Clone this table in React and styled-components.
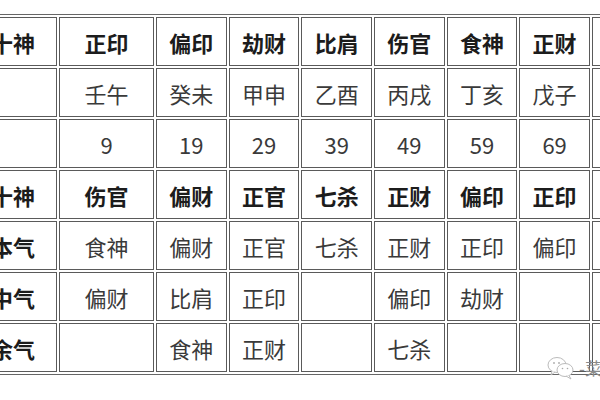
import styled, { createGlobalStyle } from "styled-components";

const GlobalStyle = createGlobalStyle`
  html, body {
    margin: 0;
    padding: 0;
    background: #fff;
  }
  body {
    font-family: "Noto Sans CJK SC", "Noto Sans", sans-serif;
  }
`;

// last column is cut off by the right edge, only its border shows
const rows = [
  { head: true, cells: ["十神", "正印", "偏印", "劫财", "比肩", "伤官", "食神", "正财", ""] },
  { cells: ["", "壬午", "癸未", "甲申", "乙酉", "丙戌", "丁亥", "戊子", ""] },
  { cells: ["", "9", "19", "29", "39", "49", "59", "69", ""] },
  { head: true, cells: ["十神", "伤官", "偏财", "正官", "七杀", "正财", "偏印", "正印", ""] },
  { cells: ["本气", "食神", "偏财", "正官", "七杀", "正财", "正印", "偏印", ""] },
  { cells: ["中气", "偏财", "比肩", "正印", "", "偏印", "劫财", "", ""] },
  { cells: ["余气", "", "食神", "正财", "", "七杀", "", "", ""] },
];

const Page = styled.div`
  position: relative;
  width: 600px;
  height: 400px;
  overflow: hidden;
`;

const Table = styled.div`
  display: grid;
  grid-template-columns: 88px 95px repeat(7, 70.67px);
  grid-auto-rows: 49px;
  gap: 2px;
  padding: 2px;
  margin: 14px 0 0 -34px;
  width: max-content;
  border: 1px solid #666;
`;

const Cell = styled.div`
  box-sizing: border-box;
  border: 1px solid #5a5a5a;
  display: flex;
  align-items: center;
  justify-content: center;
  font-size: 22px;
  line-height: 1;
  padding-top: 1px;
  white-space: nowrap;
  font-weight: ${({ $bold }) => ($bold ? 700 : 400)};
  color: ${({ $bold }) => ($bold ? "#1c1c1c" : "#3a3a3a")};
`;

const Watermark = styled.div`
  position: absolute;
  left: 546px;
  top: 355px;
  display: flex;
  align-items: center;
  gap: 3px;
  color: #8a8a8a;
  font-size: 17px;
  white-space: nowrap;
`;

const WeChatMark = () => (
  <svg width="30" height="24" viewBox="0 0 30 24">
    <ellipse cx="11" cy="9" rx="9" ry="7.5" fill="#fff" stroke="#bbb" strokeWidth="1" />
    <path d="M6 15 L5 19 L9 16" fill="#fff" stroke="#bbb" strokeWidth="1" />
    <ellipse cx="19" cy="14" rx="8" ry="6.5" fill="#fff" stroke="#bbb" strokeWidth="1" />
    <path d="M23 19.5 L25 23 L20 20" fill="#fff" stroke="#bbb" strokeWidth="1" />
    <circle cx="8" cy="7" r="0.9" fill="#aaa" />
    <circle cx="13" cy="7" r="0.9" fill="#aaa" />
    <circle cx="16.5" cy="12.5" r="0.8" fill="#aaa" />
    <circle cx="21.5" cy="12.5" r="0.8" fill="#aaa" />
  </svg>
);

export default function App() {
  return (
    <>
      <GlobalStyle />
      <Page>
        <Table>
          {rows.map((row, r) =>
            row.cells.map((text, c) => (
              <Cell key={`${r}-${c}`} $bold={row.head || c === 0}>
                {text}
              </Cell>
            ))
          )}
        </Table>
        <Watermark>
          <WeChatMark />
          <span>-菜</span>
        </Watermark>
      </Page>
    </>
  );
}
